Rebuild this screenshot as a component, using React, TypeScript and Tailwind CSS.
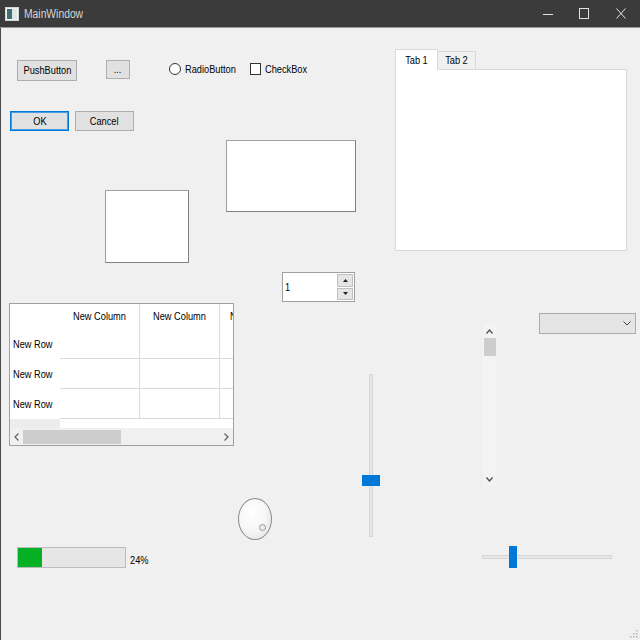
import React from "react";

const font = "font-['Liberation_Sans',Arial,sans-serif] text-[11px] text-black";

// the reference is squeezed horizontally, so text is narrowed to match
function T({ children, left }: { children: React.ReactNode; left?: boolean }) {
  return (
    <span className={`inline-block whitespace-nowrap scale-x-[0.84] ${left ? "origin-left" : "origin-center"}`}>
      {children}
    </span>
  );
}

function TitleBar() {
  return (
    <div className="h-[28px] bg-[#3b3b3b] flex items-center border-b border-[#9a9a9a] shrink-0">
      <svg width="14" height="14" viewBox="0 0 14 14" className="ml-[5px]">
        <rect x="0.5" y="0.5" width="13" height="13" fill="#f4f4f4" stroke="#cfd8d8" />
        <rect x="2" y="2" width="5" height="10" fill="#3d6f73" />
        <rect x="7" y="2" width="5" height="10" fill="#dfe7e7" />
      </svg>
      <span className="ml-[5px] font-['Liberation_Sans',Arial,sans-serif] text-[12px] text-[#d6d6d6] inline-block scale-x-[0.86] origin-left">
        MainWindow
      </span>
      <div className="flex-1" />
      <div className="flex items-center h-full">
        <div className="w-[36px] h-full flex items-center justify-center">
          <svg width="10" height="10" viewBox="0 0 10 10">
            <line x1="0" y1="5.5" x2="10" y2="5.5" stroke="#e0e0e0" strokeWidth="1" />
          </svg>
        </div>
        <div className="w-[36px] h-full flex items-center justify-center">
          <svg width="10" height="11" viewBox="0 0 10 11">
            <rect x="0.5" y="0.5" width="9" height="10" fill="none" stroke="#e0e0e0" strokeWidth="1" />
          </svg>
        </div>
        <div className="w-[38px] h-full flex items-center justify-center">
          <svg width="10" height="11" viewBox="0 0 10 11">
            <path d="M0.5 0.5 L9.5 10.5 M9.5 0.5 L0.5 10.5" stroke="#e0e0e0" strokeWidth="1" fill="none" />
          </svg>
        </div>
      </div>
    </div>
  );
}

function Btn({ label, className }: { label: string; className: string }) {
  return (
    <div
      className={`absolute flex items-center justify-center bg-[#e1e1e1] border border-[#adadad] ${font} ${className}`}
    >
      <T>{label}</T>
    </div>
  );
}

function Table() {
  const cols = ["New Column", "New Column", "New Column"];
  const rows = ["New Row", "New Row", "New Row"];
  return (
    <div className="absolute left-[8px] top-[275px] w-[225px] h-[143px] border border-[#a0a0a0] bg-white flex flex-col overflow-hidden">
      <div className="flex-1 flex flex-col overflow-hidden">
        <div className="flex h-[25px] shrink-0">
          <div className="w-[50px] shrink-0" />
          {cols.map((c, i) => (
            <div
              key={i}
              className={`w-[80px] shrink-0 border-r border-[#d9d9d9] flex items-center justify-center ${i === 2 ? "pr-[6px]" : ""} ${font}`}
            >
              <T>{c}</T>
            </div>
          ))}
        </div>
        {rows.map((r, i) => (
          <div key={i} className="flex h-[30px] shrink-0">
            <div className={`w-[50px] shrink-0 flex items-center pl-[3px] ${font}`}>
              <T left>{r}</T>
            </div>
            {cols.map((_, j) => (
              <div key={j} className="w-[80px] shrink-0 border-r border-b border-[#d9d9d9]" />
            ))}
          </div>
        ))}
        <div className="flex flex-1">
          <div className="w-[50px] bg-[#ececec]" />
        </div>
      </div>
      <div className="h-[17px] shrink-0 bg-[#f0f0f0] flex items-center">
        <div className="w-[13px] flex justify-center">
          <svg width="5" height="8" viewBox="0 0 5 8">
            <path d="M4.5 0.5 L1 4 L4.5 7.5" stroke="#606060" strokeWidth="1.2" fill="none" />
          </svg>
        </div>
        <div className="w-[98px] h-[14px] bg-[#cdcdcd]" />
        <div className="flex-1" />
        <div className="w-[13px] flex justify-center">
          <svg width="5" height="8" viewBox="0 0 5 8">
            <path d="M0.5 0.5 L4 4 L0.5 7.5" stroke="#606060" strokeWidth="1.2" fill="none" />
          </svg>
        </div>
      </div>
    </div>
  );
}

export default function App() {
  return (
    <div className="w-[640px] h-[640px] flex flex-col bg-[#f0f0f0] overflow-hidden">
      <TitleBar />
      <div className="relative flex-1 border-l border-[#4a4a4a]">
        {/* widgets placed on the designer canvas; top offsets relative to y=29 */}
        <Btn label="PushButton" className="left-[16px] top-[32px] w-[60px] h-[21px]" />
        <Btn label="..." className="left-[105px] top-[32px] w-[24px] h-[19px] text-[#555]" />

        <div className={`absolute left-[168px] top-[33px] flex items-center gap-[4px] ${font}`}>
          <div className="w-[12px] h-[12px] rounded-full border border-[#333] bg-white shrink-0" />
          <T left>RadioButton</T>
        </div>
        <div className={`absolute left-[249px] top-[33px] flex items-center gap-[4px] ${font}`}>
          <div className="w-[11px] h-[12px] border border-[#333] bg-white shrink-0" />
          <T left>CheckBox</T>
        </div>

        <div
          className={`absolute left-[9px] top-[83px] w-[59px] h-[20px] flex items-center justify-center bg-[#e1e1e1] border border-[#0078d7] shadow-[inset_0_0_0_1px_#4a9be0] ${font}`}
        >
          <T>OK</T>
        </div>
        <Btn label="Cancel" className="left-[74px] top-[83px] w-[59px] h-[20px]" />

        {/* tab widget */}
        <div className="absolute left-[394px] top-[20px] w-[232px] h-[203px] flex flex-col">
          <div className="flex items-end h-[21px] shrink-0">
            <div className={`w-[43px] h-[21px] bg-white border border-b-0 border-[#d9d9d9] flex items-center justify-center -mb-px relative z-10 ${font}`}>
              <T>Tab 1</T>
            </div>
            <div className={`w-[38px] h-[18px] bg-[#f0f0f0] border border-l-0 border-b-0 border-[#d9d9d9] flex items-center justify-center ${font}`}>
              <T>Tab 2</T>
            </div>
          </div>
          <div className="flex-1 bg-white border border-[#d9d9d9]" />
        </div>

        {/* frames */}
        <div className="absolute left-[225px] top-[112px] w-[130px] h-[72px] bg-white border border-[#828282] border-t-[#a0a0a0] border-l-[#a0a0a0]" />
        <div className="absolute left-[104px] top-[162px] w-[84px] h-[73px] bg-white border border-[#828282] border-t-[#a0a0a0] border-l-[#a0a0a0]" />

        {/* spin box */}
        <div className="absolute left-[281px] top-[244px] w-[73px] h-[30px] bg-white border border-[#a0a0a0] flex">
          <div className={`flex-1 flex items-center pl-[2px] ${font}`}>
            <T left>1</T>
          </div>
          <div className="w-[17px] flex flex-col py-[1px] pr-[1px] gap-px">
            <div className="flex-1 bg-[#e5e5e5] border border-[#c0c0c0] flex items-center justify-center">
              <svg width="5" height="3" viewBox="0 0 5 3">
                <path d="M0 3 L2.5 0 L5 3 Z" fill="#222" />
              </svg>
            </div>
            <div className="flex-1 bg-[#e5e5e5] border border-[#c0c0c0] flex items-center justify-center">
              <svg width="5" height="3" viewBox="0 0 5 3">
                <path d="M0 0 L2.5 3 L5 0 Z" fill="#222" />
              </svg>
            </div>
          </div>
        </div>

        <Table />

        {/* combo box */}
        <div className="absolute left-[538px] top-[285px] w-[97px] h-[21px] bg-[#e5e5e5] border border-[#acacac] flex items-center justify-end pr-[4px]">
          <svg width="8" height="5" viewBox="0 0 8 5">
            <path d="M0.5 0.5 L4 4 L7.5 0.5" stroke="#404040" strokeWidth="1" fill="none" />
          </svg>
        </div>

        {/* vertical scroll bar */}
        <div className="absolute left-[482px] top-[296px] w-[13px] h-[162px] bg-[#f3f3f3] flex flex-col items-center">
          <div className="h-[14px] flex items-center">
            <svg width="7" height="5" viewBox="0 0 7 5">
              <path d="M0.5 4.5 L3.5 1 L6.5 4.5" stroke="#505050" strokeWidth="1.3" fill="none" />
            </svg>
          </div>
          <div className="w-[12px] h-[18px] bg-[#cdcdcd]" />
          <div className="flex-1" />
          <div className="h-[14px] flex items-center">
            <svg width="7" height="5" viewBox="0 0 7 5">
              <path d="M0.5 0.5 L3.5 4 L6.5 0.5" stroke="#505050" strokeWidth="1.3" fill="none" />
            </svg>
          </div>
        </div>

        {/* vertical slider */}
        <div className="absolute left-[361px] top-[346px] w-[18px] h-[163px] flex justify-center">
          <div className="w-[4px] h-full bg-[#e7e7e7] border border-[#d6d6d6]" />
          <div className="absolute left-0 top-[101px] w-[18px] h-[11px] bg-[#0078d7]" />
        </div>

        {/* dial */}
        <div className="absolute left-[237px] top-[470px] w-[34px] h-[42px] rounded-[50%] border border-[#8a8a8a] bg-[radial-gradient(ellipse_at_40%_35%,#ffffff_0%,#f6f6f6_50%,#dcdcdc_100%)]">
          <div className="absolute left-[20px] top-[25px] w-[7px] h-[7px] rounded-full border border-[#9a9a9a] bg-[#ececec]" />
        </div>

        {/* progress bar */}
        <div className="absolute left-[16px] top-[519px] w-[109px] h-[21px] bg-[#e6e6e6] border border-[#bcbcbc]">
          <div className="h-full w-[24px] bg-[#06b025]" />
        </div>
        <div className={`absolute left-[129px] top-[524px] ${font}`}>
          <T left>24%</T>
        </div>

        {/* horizontal slider */}
        <div className="absolute left-[481px] top-[518px] w-[130px] h-[22px] flex items-center">
          <div className="w-full h-[4px] bg-[#e7e7e7] border border-[#d6d6d6]" />
          <div className="absolute left-[27px] top-0 w-[8px] h-[22px] bg-[#0078d7]" />
        </div>

        {/* size grip */}
        <svg width="8" height="8" viewBox="0 0 8 8" className="absolute right-[2px] bottom-[2px]">
          <rect x="6" y="0" width="1.5" height="1.5" fill="#b5b5b5" />
          <rect x="3" y="3" width="1.5" height="1.5" fill="#b5b5b5" />
          <rect x="6" y="3" width="1.5" height="1.5" fill="#b5b5b5" />
          <rect x="0" y="6" width="1.5" height="1.5" fill="#b5b5b5" />
          <rect x="3" y="6" width="1.5" height="1.5" fill="#b5b5b5" />
          <rect x="6" y="6" width="1.5" height="1.5" fill="#b5b5b5" />
        </svg>
      </div>
    </div>
  );
}
